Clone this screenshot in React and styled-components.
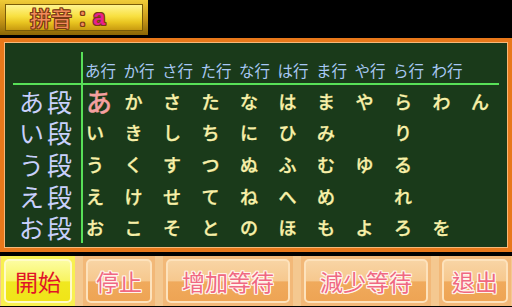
import React from 'react';
import styled, { createGlobalStyle, css } from 'styled-components';

const GlobalStyle = createGlobalStyle`
  html, body {
    margin: 0;
    padding: 0;
    background: #000;
  }
`;

const outline = (c) => `
  text-shadow:
    1px 0 0 ${c}, -1px 0 0 ${c}, 0 1px 0 ${c}, 0 -1px 0 ${c},
    1px 1px 0 ${c}, -1px -1px 0 ${c}, 1px -1px 0 ${c}, -1px 1px 0 ${c};
`;

const Screen = styled.div`
  width: 512px;
  height: 307px;
  background: #000;
  display: flex;
  flex-direction: column;
  overflow: hidden;
  font-family: "Noto Sans CJK JP", "Noto Sans", sans-serif;
`;

const TopBar = styled.div`
  height: 38px;
  display: flex;
  align-items: flex-start;
`;

const Plate = styled.div`
  width: 148px;
  height: 35px;
  box-sizing: border-box;
  padding: 4px 5px;
  background: linear-gradient(180deg, #f0cc38 0%, #c89818 55%, #8a6606 100%);
  display: flex;
`;

const PlateFace = styled.div`
  flex: 1;
  box-sizing: border-box;
  border: 1px solid #7a5c08;
  background: linear-gradient(180deg, #fff490 0%, #f8e040 45%, #e8c420 70%, #c89a10 100%);
  display: flex;
  align-items: center;
  padding-left: 24px;
  font-family: "Noto Sans CJK SC", sans-serif;
  font-size: 21px;
  line-height: 1;
  color: #f28a5a;
  ${outline('#7a3a14')}
`;

const Colon = styled.span`
  font-family: "Noto Sans CJK JP", sans-serif;
`;

const Pinyin = styled.span`
  color: #e8208c;
  font-family: "Liberation Sans", sans-serif;
  font-weight: bold;
  font-size: 22px;
`;

const Board = styled.div`
  height: 214px;
  box-sizing: border-box;
  border: 4px solid #e8781a;
  box-shadow: inset 0 0 0 1px #f8b878;
  background: #1a3a1a;
  padding: 10px 0 0 9px;
`;

const Table = styled.div`
  width: 486px;
  display: grid;
  grid-template-columns: 70px repeat(10, 38.5px) 1fr;
  grid-template-rows: 33px repeat(5, 31.6px);
`;

const Cell = styled.div`
  box-sizing: border-box;
  display: flex;
  align-items: center;
  white-space: nowrap;
  line-height: 1;
  ${(p) => p.$header && css`
    border-bottom: 2px solid #58e058;
    align-items: flex-end;
    padding-bottom: 5px;
  `}
  ${(p) => p.$label && css`
    border-right: 2px solid #58e058;
    justify-content: flex-end;
    padding-right: 6px;
  `}
`;

const HeadText = styled.span`
  font-size: 15.5px;
  color: #a8c8f4;
  padding-left: 2px;
`;

const LabelText = styled.div`
  font-size: 25px;
  line-height: 26px;
  height: 26px;
  color: #c8d0fc;
  letter-spacing: 3px;
`;

const Kana = styled.span`
  padding-left: 3px;
  font-size: ${(p) => (p.$active ? '26px' : '18px')};
  color: ${(p) => (p.$active ? '#f4a0a0' : '#f8f0a8')};
  font-weight: 500;
  -webkit-text-stroke: 0.3px currentColor;
`;

const ButtonBar = styled.div`
  margin-top: 4px;
  height: 50px;
  display: flex;
  gap: 8px;
  background: #f4c890;
  padding-left: 1px;
`;

const Button = styled.div`
  width: ${(p) => p.$w}px;
  box-sizing: border-box;
  padding: 3px;
  display: flex;
  background: ${(p) => (p.$active ? '#f8f050' : '#f2b878')};
`;

const ButtonFace = styled.div`
  flex: 1;
  box-sizing: border-box;
  border-radius: 5px;
  display: flex;
  align-items: center;
  justify-content: center;
  font-family: "Noto Sans CJK TC", sans-serif;
  font-size: 23px;
  line-height: 1;
  ${(p) => p.$active
    ? css`
      border: 2px solid #fffbc8;
      background: linear-gradient(180deg, #fcfca0 0%, #f8f460 50%, #f0e820 52%, #f0e418 100%);
      color: #e01428;
    `
    : css`
      border: 2px solid #fde2bc;
      background: linear-gradient(180deg, #f8d4a4 0%, #f6c88e 50%, #f0aa5c 52%, #eea454 100%);
      color: #f06882;
      ${outline('#fff4ec')}
    `}
`;

const headers = ['あ行', 'か行', 'さ行', 'た行', 'な行', 'は行', 'ま行', 'や行', 'ら行', 'わ行', ''];

const rows = [
  { label: 'あ段', kana: ['あ', 'か', 'さ', 'た', 'な', 'は', 'ま', 'や', 'ら', 'わ', 'ん'] },
  { label: 'い段', kana: ['い', 'き', 'し', 'ち', 'に', 'ひ', 'み', '', 'り', '', ''] },
  { label: 'う段', kana: ['う', 'く', 'す', 'つ', 'ぬ', 'ふ', 'む', 'ゆ', 'る', '', ''] },
  { label: 'え段', kana: ['え', 'け', 'せ', 'て', 'ね', 'へ', 'め', '', 'れ', '', ''] },
  { label: 'お段', kana: ['お', 'こ', 'そ', 'と', 'の', 'ほ', 'も', 'よ', 'ろ', 'を', ''] },
];

const buttons = [
  { text: '開始', w: 74, active: true },
  { text: '停止', w: 72 },
  { text: '增加等待', w: 130 },
  { text: '減少等待', w: 130 },
  { text: '退出', w: 72 },
];

export default function App() {
  return (
    <Screen>
      <GlobalStyle />
      <TopBar>
        <Plate>
          <PlateFace>
            拼音<Colon>：</Colon><Pinyin>a</Pinyin>
          </PlateFace>
        </Plate>
      </TopBar>
      <Board>
        <Table>
          <Cell $header $label />
          {headers.map((h, i) => (
            <Cell $header key={'h' + i}>
              <HeadText>{h}</HeadText>
            </Cell>
          ))}
          {rows.map((r, ri) => (
            <React.Fragment key={r.label}>
              <Cell $label>
                <LabelText>{r.label}</LabelText>
              </Cell>
              {r.kana.map((k, ki) => (
                <Cell key={ki}>
                  <Kana $active={ri === 0 && ki === 0}>{k}</Kana>
                </Cell>
              ))}
            </React.Fragment>
          ))}
        </Table>
      </Board>
      <ButtonBar>
        {buttons.map((b) => (
          <Button key={b.text} $w={b.w} $active={b.active}>
            <ButtonFace $active={b.active}>{b.text}</ButtonFace>
          </Button>
        ))}
      </ButtonBar>
    </Screen>
  );
}
